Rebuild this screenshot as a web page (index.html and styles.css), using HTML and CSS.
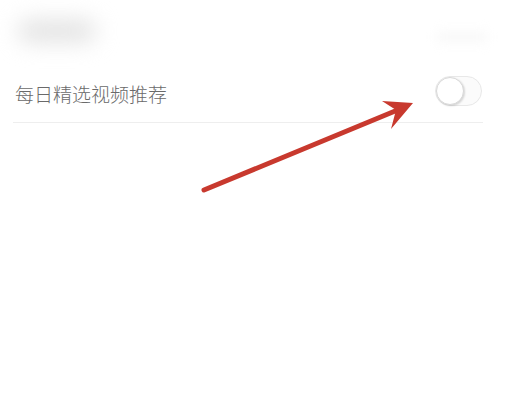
FILE: index.html
```html
<!DOCTYPE html>
<html lang="zh">
<head>
<meta charset="utf-8">
<link rel="stylesheet" href="styles.css">
</head>
<body>
<div class="page">
  <div class="header">
    <div class="blur-title"></div>
    <div class="blur-right"></div>
  </div>
  <div class="row">
    <span class="label">每日精选视频推荐</span>
    <div class="toggle"><div class="knob"></div></div>
  </div>
  <div class="divider"></div>
  <svg class="arrow" width="517" height="420" viewBox="0 0 517 420">
    <line x1="204" y1="190" x2="400" y2="109" stroke="#c8392e" stroke-width="5" stroke-linecap="round"/>
    <polygon points="413,103 382,101 396,110 391,129" fill="#c8392e"/>
  </svg>
</div>
</body>
</html>
```
FILE: styles.css
```css
html, body {
  margin: 0;
  padding: 0;
  background: #ffffff;
}
.page {
  position: relative;
  width: 517px;
  height: 420px;
  overflow: hidden;
  font-family: "Noto Sans CJK SC", "Noto Sans", sans-serif;
}
.header {
  height: 64px;
  display: flex;
  justify-content: space-between;
  align-items: center;
  padding: 0 30px 0 18px;
}
.blur-title {
  width: 78px;
  height: 22px;
  margin-top: -2px;
  background: #e2e2e2;
  border-radius: 11px;
  filter: blur(11px);
}
.blur-right {
  width: 50px;
  height: 8px;
  margin-top: 10px;
  background: #f6f6f6;
  filter: blur(6px);
}
.row {
  height: 58px;
  display: flex;
  align-items: center;
  justify-content: space-between;
  padding: 0 35px 0 15px;
}
.label {
  font-size: 19px;
  color: #6a6a6a;
  font-weight: 300;
}
.toggle {
  width: 45px;
  height: 28px;
  border: 1px solid #e8e8e8;
  border-radius: 15px;
  background: #fbfbfb;
  position: relative;
  margin-top: -4px;
}
.knob {
  width: 26px;
  height: 26px;
  border-radius: 50%;
  background: #ffffff;
  border: 1px solid #d8d8d8;
  box-shadow: 1px 1px 2px rgba(0,0,0,0.15);
  position: absolute;
  left: 0;
  top: 0;
}
.divider {
  margin: 0 34px 0 13px;
  border-top: 1px solid #eeeeee;
}
.arrow {
  position: absolute;
  left: 0;
  top: 0;
}
```
